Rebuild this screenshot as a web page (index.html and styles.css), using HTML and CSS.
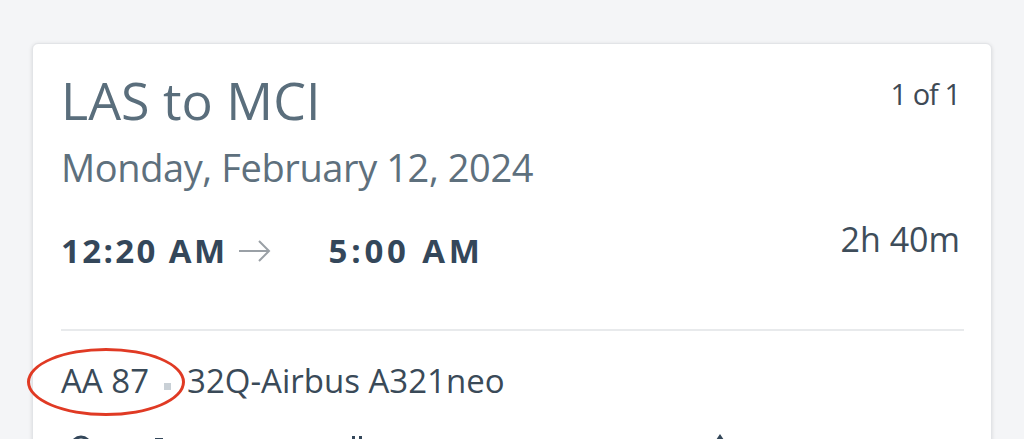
FILE: index.html
```html
<!DOCTYPE html>
<html lang="en">
<head>
    <meta charset="UTF-8">
    <meta name="viewport" content="width=device-width, initial-scale=1.0">
    <title>Trip details</title>
    <link rel="stylesheet" href="styles.css">
</head>
<body>
    <div class="page">
        <div class="card">
            <div class="header">
                <h1 class="route">LAS to MCI</h1>
                <span class="pager">1 of 1</span>
            </div>
            <div class="date">Monday, February 12, 2024</div>

            <div class="times">
                <div class="time-pair">
                    <span class="time">12:20 AM</span>
                    <svg class="arrow" width="34" height="24" viewBox="0 0 34 24">
                        <path d="M1 12 H31 M21 2 L31 12 L21 22" fill="none" stroke="#9aa0a6" stroke-width="2"/>
                    </svg>
                    <span class="time time-wide">5:00 AM</span>
                </div>
                <span class="duration">2h 40m</span>
            </div>

            <hr class="divider">

            <div class="flight">
                <span class="flight-no">AA 87</span>
                <span class="dot"></span>
                <span class="aircraft">32Q-Airbus A321neo</span>
                <span class="circle-mark"></span>
            </div>

            <div class="amenities">
                <svg class="amenity a1" width="24" height="24" viewBox="0 0 24 24"><circle cx="12" cy="12" r="9" fill="none" stroke="#34475a" stroke-width="3"/></svg>
                <svg class="amenity a2" width="12" height="12" viewBox="0 0 12 12"><rect x="2" y="4" width="8" height="6" fill="#34475a"/></svg>
                <svg class="amenity a3" width="12" height="12" viewBox="0 0 12 12"><rect x="2" y="5" width="8" height="5" fill="#34475a"/></svg>
                <svg class="amenity a4" width="16" height="16" viewBox="0 0 16 16"><rect x="3" y="2" width="3" height="12" fill="#34475a"/><rect x="10" y="2" width="3" height="12" fill="#34475a"/></svg>
                <svg class="amenity a5" width="16" height="16" viewBox="0 0 16 16"><path d="M5 0 L9 6 L6 6 L6 16 L4 16 L4 6 L1 6 Z" fill="#34475a"/><rect x="10" y="8" width="4" height="3" fill="#34475a"/></svg>
            </div>
        </div>
    </div>
</body>
</html>
```

FILE: styles.css
```css
body {
    margin: 0;
    height: 439px;
    overflow: hidden;
    background-color: #f4f5f7;
    font-family: "Open Sans", "Noto Sans", sans-serif;
}
.page {
    padding: 43px 32px 0 32px;
}
.card {
    background-color: #fff;
    border: 1px solid #e2e4e7;
    border-radius: 6px;
    box-shadow: 0 1px 4px rgba(0, 0, 0, 0.12);
    padding: 26px 31px 0 28px;
    height: 420px;
}
.header {
    display: flex;
    justify-content: space-between;
    align-items: flex-start;
}
.route {
    margin: 0;
    font-size: 52px;
    font-weight: 400;
    line-height: 60px;
    color: #5a6e7c;
}
.pager {
    margin-top: 6px;
    font-size: 29px;
    letter-spacing: -1px;
    line-height: 36px;
    color: #3e4a55;
}
.date {
    margin-top: 13px;
    font-size: 38px;
    letter-spacing: -0.4px;
    line-height: 48px;
    color: #5e707d;
}
.times {
    display: flex;
    justify-content: space-between;
    align-items: flex-start;
    margin-top: 28px;
}
.time-pair {
    display: flex;
    align-items: center;
    padding-top: 12px;
}
.time {
    font-size: 33px;
    font-weight: 700;
    letter-spacing: 2.4px;
    line-height: 40px;
    color: #34475a;
}
.time-wide {
    letter-spacing: 3.8px;
}
.arrow {
    margin: 0 57px 0 10px;
}
.duration {
    font-size: 34px;
    line-height: 40px;
    color: #3e4d5a;
}
.divider {
    margin: 58px -4px 0 0;
    border: none;
    border-top: 2px solid #e8eaec;
}
.flight {
    position: relative;
    display: flex;
    align-items: center;
    margin-top: 30px;
    font-size: 33px;
    line-height: 40px;
    color: #3a4a58;
}
.dot {
    width: 7px;
    height: 7px;
    margin: 10px 16px 0 15px;
    background-color: #c9d0d6;
}
.circle-mark {
    position: absolute;
    left: -34px;
    top: -13px;
    width: 152px;
    height: 62px;
    border: 3px solid #e03a24;
    border-radius: 50%;
}
.amenities {
    display: flex;
    align-items: flex-start;
    margin-top: 33px;
}
.amenity.a1 { margin-left: 8px; }
.amenity.a2 { margin-left: 60px; }
.amenity.a3 { margin-left: 72px; }
.amenity.a4 { margin-left: 100px; }
.amenity.a5 { margin-left: 350px; }
```
